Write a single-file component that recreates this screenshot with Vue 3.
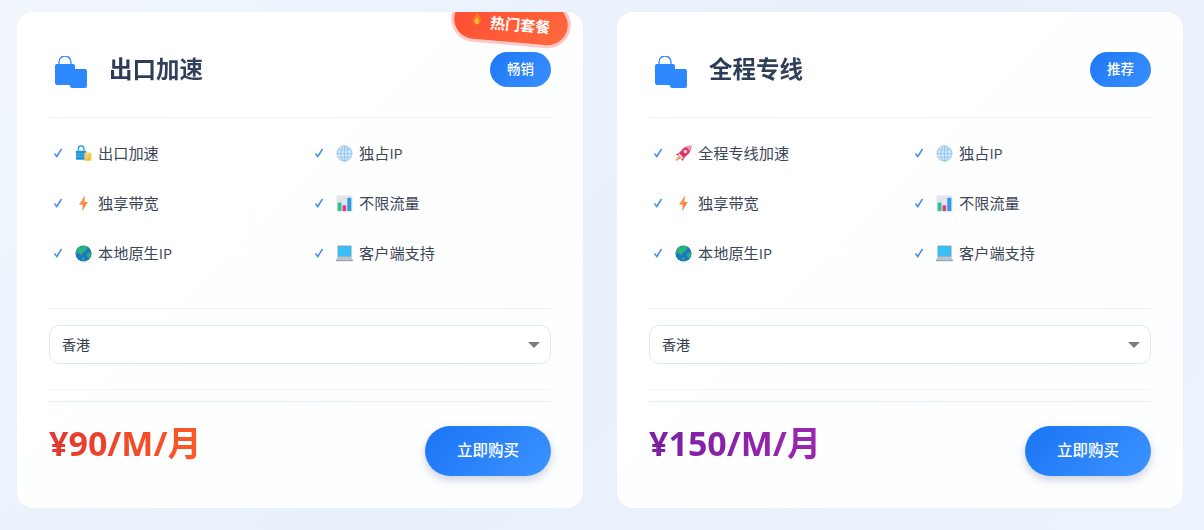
<script setup>
const plans = [
  {
    name: '出口加速',
    tag: '畅销',
    price: '¥90/M/月',
    priceClass: 'price-red',
    hot: true,
    features: [
      { icon: 'bags', text: '出口加速' },
      { icon: 'globe', text: '独占IP' },
      { icon: 'bolt', text: '独享带宽' },
      { icon: 'chart', text: '不限流量' },
      { icon: 'earth', text: '本地原生IP' },
      { icon: 'laptop', text: '客户端支持' }
    ]
  },
  {
    name: '全程专线',
    tag: '推荐',
    price: '¥150/M/月',
    priceClass: 'price-purple',
    hot: false,
    features: [
      { icon: 'rocket', text: '全程专线加速' },
      { icon: 'globe', text: '独占IP' },
      { icon: 'bolt', text: '独享带宽' },
      { icon: 'chart', text: '不限流量' },
      { icon: 'earth', text: '本地原生IP' },
      { icon: 'laptop', text: '客户端支持' }
    ]
  }
]
</script>

<template>
  <div class="page">
    <svg class="sprite" aria-hidden="true">
      <symbol id="bags" viewBox="0 0 18 18">
        <path d="M1 7a1 1 0 0 1 1-1h9a1 1 0 0 1 1 1v8.500H2a1 1 0 0 1-1-1z" fill="#1f93dc" />
        <path d="M3.500 6V4a3 3 0 0 1 6 0v2" fill="none" stroke="#1f93dc" stroke-width="1.300" />
        <path d="M1 9.500h11M1 12h11" stroke="#7cc4ee" stroke-width="0.700" />
        <rect x="10" y="8" width="7.500" height="9" rx="1" fill="#f9d162" />
        <path d="M11.500 15h4v-4" fill="none" stroke="#e3a52a" stroke-width="0.900" />
      </symbol>
      <symbol id="globe" viewBox="0 0 18 18">
        <circle cx="9" cy="9" r="8" fill="#cfe6f8" stroke="#8fc3ea" stroke-width="0.900" />
        <ellipse cx="9" cy="9" rx="3.800" ry="8" fill="none" stroke="#8fc3ea" stroke-width="0.800" />
        <path d="M9 1v16M1 9h16M2.200 5h13.600M2.200 13h13.600" stroke="#8fc3ea" stroke-width="0.800" />
      </symbol>
      <symbol id="bolt" viewBox="0 0 18 18">
        <path d="M10.500 .5 4.500 10h3.800L7.500 17.500 13.500 7.500H10z" fill="#f5853f" />
        <path d="M10.500 .5 4.500 10h3.800z" fill="#fa9a55" />
      </symbol>
      <symbol id="chart" viewBox="0 0 18 18">
        <rect x="0.500" y="0.500" width="17" height="17" rx="1.500" fill="#e2e5ee" />
        <rect x="1.800" y="8" width="4" height="9" fill="#35bf8b" />
        <rect x="7" y="11" width="3.700" height="6" fill="#e8337f" />
        <rect x="12" y="3" width="4.200" height="14" fill="#2f9be0" />
      </symbol>
      <symbol id="earth" viewBox="0 0 18 18">
        <circle cx="9" cy="9" r="8.500" fill="#1d78c1" />
        <path d="M5 2c2-1 5-1.200 7.500-.5l1 1.800-2 2-1.500 2.500-2 .5-1 2.500L4.500 9 1.500 8c.2-2.500 1.500-4.700 3.500-6zM12.500 9l4-.8c.6 2.200.2 4.500-1.200 6.300l-2.300-1.700z" fill="#27b37a" />
        <path d="M8 12.500l2 .8-.5 3.600-1.200.2z" fill="#27b37a" />
      </symbol>
      <symbol id="laptop" viewBox="0 0 18 18">
        <rect x="2" y="1" width="14" height="11.500" fill="#38c0fa" stroke="#8a97a3" stroke-width="0.700" />
        <path d="M2 12.500h14l2 3.500H0z" fill="#bcc3ca" />
        <path d="M0 16h18v1.200H0z" fill="#939ca5" />
      </symbol>
      <symbol id="rocket" viewBox="0 0 18 18">
        <path d="M17.500.5c-4.800.2-8.500 2-11 5.500L4 8.500 9.500 14l2.500-2.500C15.500 9 17.300 5.500 17.500.5z" fill="#e5305f" />
        <path d="M11.500 2.500c1.500.4 3.500 2.400 4 4L17.500.5z" fill="#f4a6bb" />
        <circle cx="11" cy="7" r="1.900" fill="#b9d4ea" />
        <path d="M4.500 8.500 1 10l2.500 1.500zM9.500 13.500 8 17l-1.500-2.500z" fill="#c9234f" />
        <path d="M4.500 11 7 13.500 1.500 17 .5 15.500z" fill="#f59a5c" />
      </symbol>
      <symbol id="flame" viewBox="0 0 14 16">
        <path d="M7 .5c.6 2.600 4.800 5 4.800 9.300A4.800 5.200 0 0 1 2.200 9.800C2.200 6.500 6 4 7 .5z" fill="#f57c25" />
        <path d="M7 6.500c.4 1.500 2.700 3 2.700 5A2.700 3 0 0 1 4.300 11.500C4.300 9.700 6.400 8.500 7 6.500z" fill="#fcc22e" />
      </symbol>
    </svg>

    <section v-for="plan in plans" :key="plan.name" class="card">
      <div v-if="plan.hot" class="ribbon">
        <svg class="flame"><use href="#flame" /></svg>
        <span>热门套餐</span>
      </div>

      <header class="card-head">
        <svg class="head-icon" viewBox="0 0 32 32" aria-hidden="true">
          <path d="M0 10a2 2 0 0 1 2-2h16a2 2 0 0 1 2 2v19H2a2 2 0 0 1-2-2z" fill="#2d87ff" />
          <path d="M4 9V6a6 6 0 0 1 12 0v3" fill="none" stroke="#2d87ff" stroke-width="1.300" />
          <rect x="15" y="13" width="17" height="19" rx="2" fill="#2d87ff" />
        </svg>
        <h2 class="title">{{ plan.name }}</h2>
        <span class="tag">{{ plan.tag }}</span>
      </header>

      <ul class="features">
        <li v-for="item in plan.features" :key="item.text" class="feature">
          <svg class="check" viewBox="0 0 12 12" aria-hidden="true">
            <path d="M2.500 6.500 4.800 9.500 9.500 2" fill="none" stroke="#4e8fe8" stroke-width="1.600" />
          </svg>
          <svg class="emoji" aria-hidden="true"><use :href="'#' + item.icon" /></svg>
          <span class="feature-text">{{ item.text }}</span>
        </li>
      </ul>

      <div class="select-box">
        <select class="select">
          <option>香港</option>
        </select>
        <i class="arrow"></i>
      </div>

      <div class="spacer-line"></div>

      <footer class="card-foot">
        <div class="price" :class="plan.priceClass">{{ plan.price }}</div>
        <button class="buy" type="button">立即购买</button>
      </footer>
    </section>
  </div>
</template>

<style>
body {
  margin: 0;
}
</style>

<style scoped>
.page {
  box-sizing: border-box;
  width: 1204px;
  height: 530px;
  padding: 12px 21px 22px 17px;
  display: grid;
  grid-template-columns: 566px 566px;
  column-gap: 34px;
  background: linear-gradient(135deg, #f1f6fd 0%, #e8f0fc 50%, #edf3fd 100%);
  font-family: "Open Sans", "Noto Sans CJK SC", sans-serif;
  overflow: hidden;
}

.sprite {
  position: absolute;
  width: 0;
  height: 0;
}

.card {
  position: relative;
  box-sizing: border-box;
  height: 496px;
  padding: 32px 32px 0;
  background: linear-gradient(135deg, #ffffff 0%, #fdfeff 100%);
  border-radius: 16px;
  overflow: hidden;
}

.ribbon {
  position: absolute;
  top: -10px;
  right: 15px;
  width: 114px;
  height: 40px;
  padding-top: 3px;
  box-sizing: border-box;
  display: flex;
  align-items: center;
  justify-content: center;
  gap: 7px;
  border-radius: 20px;
  background: linear-gradient(135deg, #ff4b33, #ff6a3d);
  box-shadow: 0 0 0 3px rgba(255, 120, 120, 0.4);
  color: #fff;
  font-size: 15px;
  font-weight: 700;
  transform: rotate(5deg);
}

.flame {
  width: 12px;
  height: 15px;
  margin-top: -4px;
}

.card-head {
  display: flex;
  align-items: center;
  height: 52px;
  padding: 0 0 21px;
  border-bottom: 1px solid #eef3f9;
}

.head-icon {
  width: 32px;
  height: 32px;
  margin-left: 6px;
  margin-top: 3px;
}

.title {
  flex: 1;
  margin: -3px 0 0 22px;
  font-size: 23.500px;
  line-height: 32px;
  font-weight: 700;
  background: linear-gradient(90deg, #2b3a55, #46546f);
  -webkit-background-clip: text;
  background-clip: text;
  color: transparent;
}

.tag {
  width: 61px;
  height: 35px;
  border-radius: 18px;
  background: linear-gradient(135deg, #1e78f5, #3a8fff);
  color: #fff;
  font-size: 13.500px;
  font-weight: 500;
  line-height: 35px;
  text-align: center;
  margin-top: -1px;
}

.features {
  list-style: none;
  margin: 10px 0 0;
  padding: 0 0 30px;
  display: grid;
  grid-template-columns: 241px 241px;
  column-gap: 20px;
  grid-auto-rows: 50px;
  border-bottom: 1px solid #eef3f9;
}

.feature {
  display: flex;
  align-items: center;
  padding-left: 3px;
  color: #3d4757;
  font-size: 15.200px;
}

.feature-text {
  margin-bottom: 2px;
}

.check {
  width: 12px;
  height: 12px;
  margin-right: 11px;
}

.emoji {
  width: 17px;
  height: 17px;
  margin-right: 6px;
}

.select-box {
  position: relative;
  margin-top: 16px;
}

.select {
  display: block;
  width: 100%;
  height: 39px;
  padding: 1px 12px 1px;
  appearance: none;
  background: #fff;
  border: 1px solid #d8e7f3;
  border-radius: 10px;
  color: #2f3a4a;
  font-family: inherit;
  font-size: 14px;
}

.arrow {
  position: absolute;
  top: 17px;
  right: 11px;
  width: 0;
  height: 0;
  border-left: 6px solid transparent;
  border-right: 6px solid transparent;
  border-top: 6px solid #7b7b7b;
}

.spacer-line {
  height: 11px;
  margin-top: 25px;
  border-top: 1px solid #f0f5fa;
  border-bottom: 1px solid #e6eff6;
}

.card-foot {
  display: flex;
  justify-content: space-between;
  align-items: flex-start;
  padding-top: 24px;
}

.price {
  font-size: 34px;
  line-height: 36px;
  font-weight: 700;
  margin-top: -1px;
  background-clip: text;
  -webkit-background-clip: text;
  color: transparent;
}

.price-red {
  background-image: linear-gradient(90deg, #e0382e, #ff5a26);
}

.price-purple {
  background-image: linear-gradient(90deg, #7b1fa2, #9c27b0);
}

.buy {
  width: 126px;
  height: 50px;
  padding: 0 0 4px;
  border: 0;
  border-radius: 25px;
  background: linear-gradient(135deg, #1a75f5, #3c92ff);
  box-shadow: 0 4px 10px rgba(50, 80, 130, 0.25);
  color: #fff;
  font-family: inherit;
  font-size: 15.500px;
  font-weight: 500;
}
</style>
